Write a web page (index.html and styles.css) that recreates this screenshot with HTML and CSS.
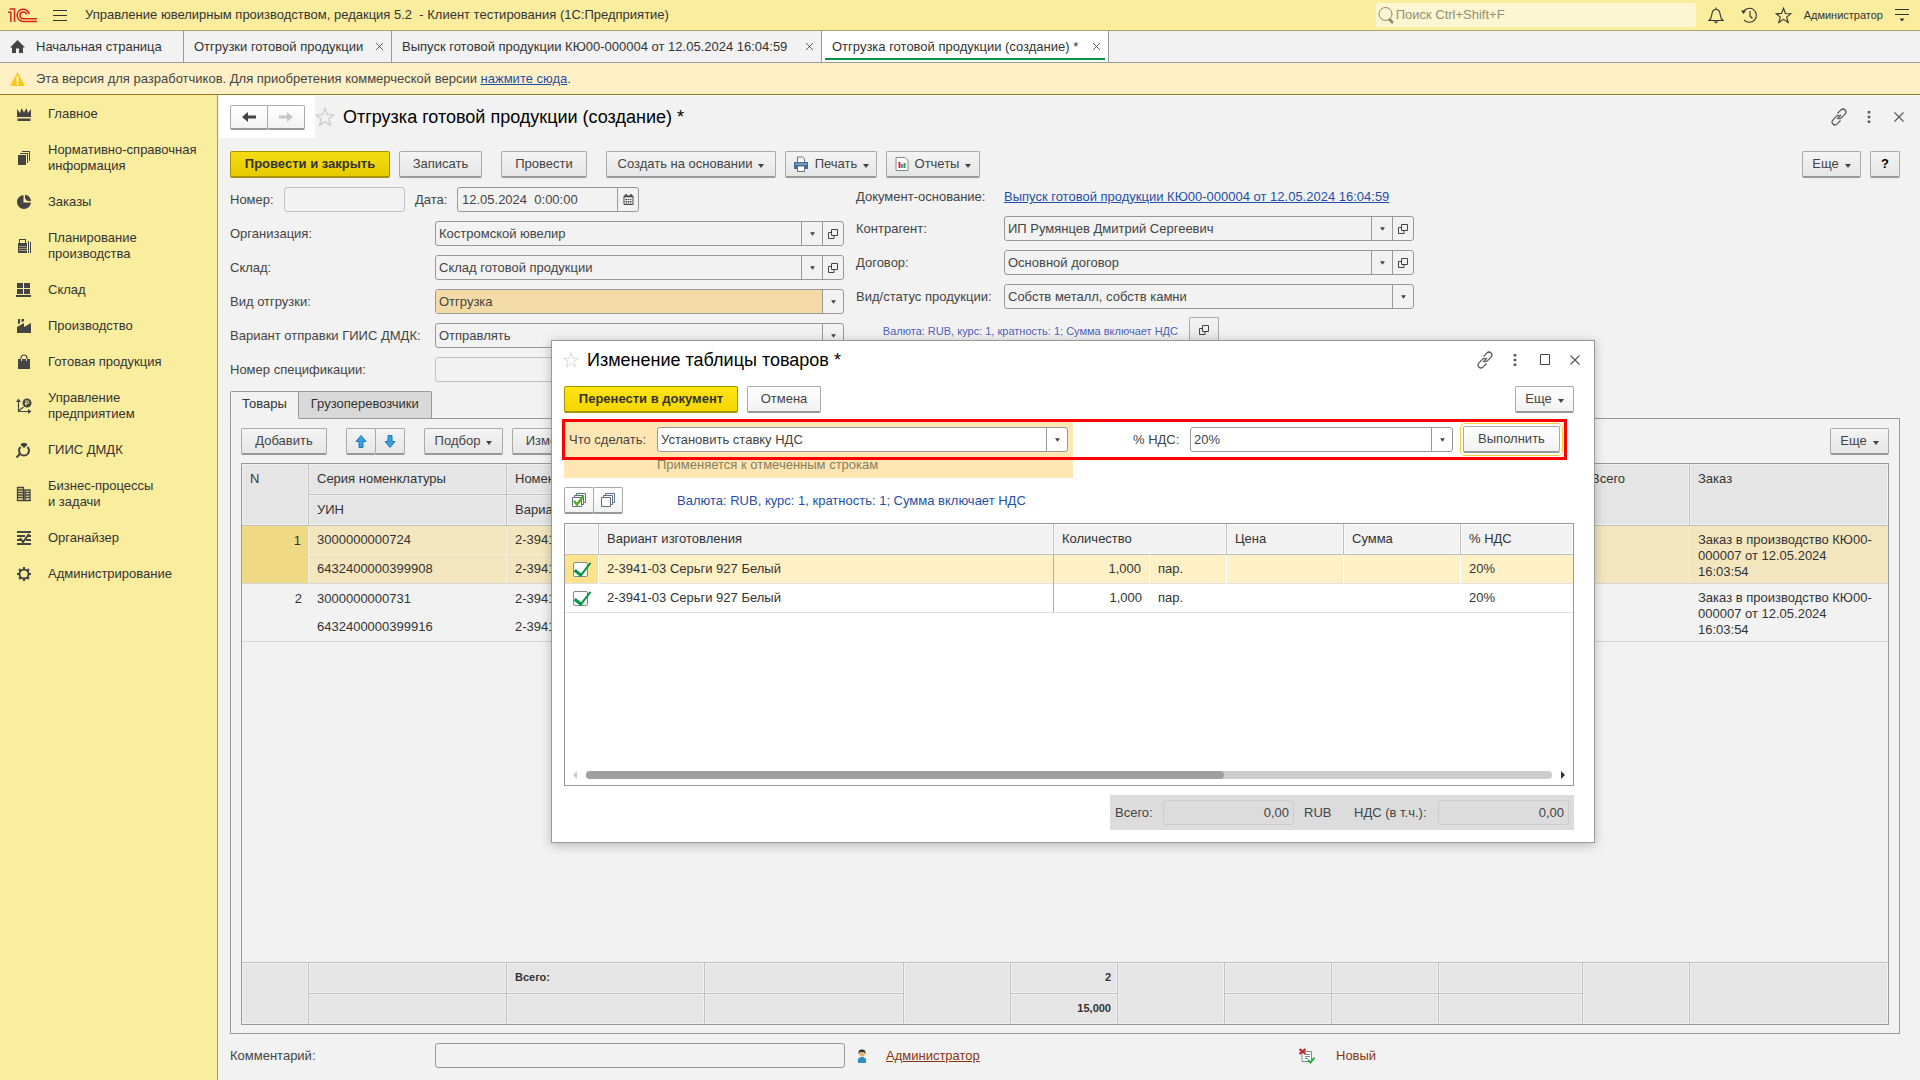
FILE: index.html
```html
<!DOCTYPE html>
<html lang="ru">
<head>
<meta charset="utf-8">
<title>Отгрузка готовой продукции (создание) *</title>
<link rel="stylesheet" href="styles.css">
</head>
<body>
<svg class="sprite" aria-hidden="true">
  <symbol id="i-close" viewBox="0 0 12 12"><path d="M1.500 1.500l9 9M10.500 1.500l-9 9" fill="none" stroke="currentColor" stroke-width="1.100"/></symbol>
  <symbol id="i-star" viewBox="0 0 20 20"><path d="M10 1.500l2.300 6.200 6.400.2-5 4 1.800 6.400L10 14.600l-5.500 3.700 1.800-6.400-5-4 6.400-.2z" fill="none" stroke="currentColor" stroke-width="1.300"/></symbol>
  <symbol id="i-down" viewBox="0 0 6 4"><path d="M0 0h6L3 4z" fill="currentColor"/></symbol>
  <symbol id="i-open" viewBox="0 0 10 10"><path d="M3.500.5h6v6h-6zM3.500 3.500H.5v6h5.500V6.500" fill="none" stroke="currentColor"/></symbol>
  <symbol id="i-link" viewBox="0 0 18 18"><g fill="none" stroke="currentColor" stroke-width="1.200"><path d="M7.500 5.500l3.200-3.300c1.300-1.300 3.300-1.300 4.400-.2s1 3-.3 4.300l-3.200 3.300c-1 1-2 1.200-3 .8"/><path d="M10.500 12.500l-3.200 3.300c-1.300 1.300-3.300 1.300-4.400.2s-1-3 .3-4.300l3.200-3.300c1-1 2-1.200 3-.8"/><path d="M7 11.200l4-4.200"/></g></symbol>
  <symbol id="i-dots" viewBox="0 0 4 14"><path d="M.7 1h2.600v2.600H.7zM.7 5.700h2.600v2.600H.7zM.7 10.400h2.600V13H.7z" fill="currentColor"/></symbol>
</svg>

<header class="topbar">
  <svg class="logo" viewBox="0 0 30 15"><g fill="none" stroke="#d9261c" stroke-width="1.500"><path d="M0 4.200h2.800V14M1.500 1H6.500v13"/><path d="M21.200 6A6.100 6.100 0 1 0 15.500 13.400H29"/><path d="M18.700 6.500a3.400 3.400 0 1 0-3.200 4.300H29"/></g></svg>
  <button class="icon-btn burger" aria-label="Меню"><svg width="14" height="13" viewBox="0 0 14 13"><path d="M0 1.500h14M0 6.500h14M0 11.500h14" stroke="#333"/></svg></button>
  <span class="app-title">Управление ювелирным производством, редакция 5.2 &nbsp;- Клиент тестирования (1С:Предприятие)</span>
  <label class="search"><svg width="16" height="19" viewBox="0 0 16 19"><circle cx="7.500" cy="8" r="6.500" fill="none" stroke="#8d8868"/><path d="M11 13l4 4" stroke="#8d8868" stroke-width="2.500"/></svg><input type="text" placeholder="Поиск Ctrl+Shift+F" aria-label="Поиск"></label>
  <button class="icon-btn" aria-label="Уведомления"><svg width="16" height="17" viewBox="0 0 16 17"><path d="M1 13.500h14c-2.500-2-2.500-4-3-7C11.600 3.500 10 2.500 8 2.500s-3.600 1-4 4c-.5 3-.5 5-3 7zM8 2.500V.5" fill="none" stroke="#333" stroke-width="1.100"/><path d="M5.500 14.500h5l-2.500 2z" fill="#333"/></svg></button>
  <button class="icon-btn" aria-label="История"><svg width="17" height="17" viewBox="0 0 17 17"><path d="M2.200 5A7 7 0 1 1 3 12.800M9 4v5l2.500 2.500" fill="none" stroke="#333" stroke-width="1.100"/><path d="M0 3.500h5L2.500 7z" fill="#333"/></svg></button>
  <button class="icon-btn" aria-label="Избранное"><svg width="17" height="17"><use href="#i-star"/></svg></button>
  <a class="user" href="#">Администратор</a>
  <button class="icon-btn" aria-label="Настройки"><svg width="14" height="13" viewBox="0 0 14 13"><path d="M0 .5h14M0 5.500h14" stroke="#333"/><path d="M4.500 9.500h5L7 12.500z" fill="#333"/></svg></button>
</header>

<nav class="tabs">
  <a class="tab tab-home" href="#"><svg width="15" height="13" viewBox="0 0 15 13"><path d="M7.500 0L0 7.500h2V13h4V8.500h3V13h4V7.500h2z" fill="#444"/></svg>Начальная страница</a>
  <a class="tab tab-list" href="#">Отгрузки готовой продукции<svg width="9" height="9"><use href="#i-close"/></svg></a>
  <a class="tab tab-source" href="#">Выпуск готовой продукции КЮ00-000004 от 12.05.2024 16:04:59<svg width="9" height="9"><use href="#i-close"/></svg></a>
  <a class="tab tab-active" href="#">Отгрузка готовой продукции (создание) *<svg width="9" height="9"><use href="#i-close"/></svg></a>
</nav>

<div class="notice">
  <svg width="15" height="14" viewBox="0 0 15 14"><path d="M7.500 0L15 14H0z" fill="#f7c81e"/><path d="M7.500 4.500v5M7.500 10.500v2" stroke="#fff" stroke-width="1.800"/></svg>
  <p>Эта версия для разработчиков. Для приобретения коммерческой версии <a href="#">нажмите сюда</a>.</p>
</div>

<div class="workspace">
  <nav class="sidebar">
    <a href="#"><svg width="16" height="16" viewBox="0 0 16 16"><path d="M1 3l3 4 1.500-5L8 6.500 10.500 2 12 7l3-4v8H1zM1.500 12.500h13V15h-13z"/></svg><span>Главное</span></a>
    <a href="#"><svg width="16" height="16" viewBox="0 0 16 16"><path d="M2 5h8v10H2zM4 3h8v10h-1V4H4zM6 1h8v10h-1V2H6z"/></svg><span>Нормативно-справочная<br>информация</span></a>
    <a href="#"><svg width="16" height="16" viewBox="0 0 16 16"><path d="M7.500 1v7.500H15A7 7 0 1 1 7.500 1zM9 0.800a6.500 6.500 0 0 1 6 6.200h-3.500L9 4.500z"/></svg><span>Заказы</span></a>
    <a href="#"><svg width="16" height="16" viewBox="0 0 16 16"><path d="M3 5V1h7v4h1v10H2V5zm1-3v3h5V2zM12 3h1v12h-1zM14 4h1v11h-1z" fill-rule="evenodd"/><path d="M3.500 8.500h7M3.500 10.500h7M3.500 12.500h7" stroke="#fbed9e" stroke-dasharray="1 1"/></svg><span>Планирование<br>производства</span></a>
    <a href="#"><svg width="16" height="16" viewBox="0 0 16 16"><path d="M1 1h6v5H1zM8 1h6v5H8zM1 7h6v5H1zM8 7h6v5H8zM0 13h15v2H0z"/></svg><span>Склад</span></a>
    <a href="#"><svg width="16" height="16" viewBox="0 0 16 16"><path d="M1 15V9l7-4v4l7-4v10zM2 1h2v4L2 6.500zM5.500 1H8v2L5.500 4.500z"/></svg><span>Производство</span></a>
    <a href="#"><svg width="16" height="16" viewBox="0 0 16 16"><path d="M2 5h12v10H2z"/><path d="M5 7V4a3 3 0 0 1 6 0v3" fill="none" stroke="#444" stroke-width="1.200"/><path d="M5.500 5v2M10.500 5v2" stroke="#fbed9e"/></svg><span>Готовая продукция</span></a>
    <a href="#"><svg width="16" height="16" viewBox="0 0 16 16"><path d="M2.500 2v11.500H14M2.500 13l5-4" fill="none" stroke="#444" stroke-width="1.200"/><path d="M0 4l2.500-3.500L5 4zM12 11l3.500 2.500L12 16z"/><circle cx="11" cy="5" r="4.500"/><path d="M10 2.500v5M10 3h1.500a1 1 0 0 1 0 2.500H9" fill="none" stroke="#fbed9e"/></svg><span>Управление<br>предприятием</span></a>
    <a href="#"><svg width="16" height="16" viewBox="0 0 16 16"><path d="M8 6l3.500-3L10 1H6L4.500 3z"/><path d="M4.500 5a5 5 0 1 0 7 0" fill="none" stroke="#444" stroke-width="2"/><path d="M4 12l-3.500 3.500" stroke="#444" stroke-width="2"/></svg><span>ГИИС ДМДК</span></a>
    <a href="#"><svg width="16" height="16" viewBox="0 0 16 16"><path d="M1.500 15V1.500h6V15M9 15V4h5v11M1 14.500h14M2 4h5.500M2 6.500h5.500M2 9h5.500M2 11.500h5.500M9 6.500h5M9 9h5M9 11.500h5" fill="none" stroke="#444" stroke-width="1.300"/></svg><span>Бизнес-процессы<br>и задачи</span></a>
    <a href="#"><svg width="16" height="16" viewBox="0 0 16 16"><path d="M1 2h14M1 6h8M12 6h3M1 10h4M10 10h5M1 14h14" stroke="#444" stroke-width="2"/><path d="M4 8l3 4 6-8" fill="none" stroke="#444" stroke-width="2"/></svg><span>Органайзер</span></a>
    <a href="#"><svg width="16" height="16" viewBox="0 0 16 16"><circle cx="8" cy="8" r="4.500" fill="none" stroke="#444" stroke-width="2"/><path d="M8 1v2.500M8 12.500V15M1 8h2.500M12.500 8H15M3 3l2 2M11 11l2 2M13 3l-2 2M5 11l-2 2" stroke="#444" stroke-width="2"/></svg><span>Администрирование</span></a>
  </nav>

  <main class="doc">
    <div class="doc-head">
      <div class="history">
        <button class="btn" aria-label="Назад"><svg width="14" height="10" viewBox="0 0 14 10"><path d="M0 5l6-5v3.500h8v3H6V10z" fill="#444"/></svg></button><button class="btn" aria-label="Вперед"><svg width="14" height="10" viewBox="0 0 14 10"><path d="M14 5L8 0v3.500H0v3h8V10z" fill="#c6c6c6"/></svg></button>
      </div>
      <svg class="fav" width="20" height="20"><use href="#i-star"/></svg>
      <h1>Отгрузка готовой продукции (создание) *</h1>
      <div class="win-tools">
        <button class="icon-btn" aria-label="Ссылка"><svg width="18" height="18"><use href="#i-link"/></svg></button>
        <button class="icon-btn" aria-label="Меню формы"><svg width="4" height="14"><use href="#i-dots"/></svg></button>
        <button class="icon-btn" aria-label="Закрыть"><svg width="12" height="12"><use href="#i-close"/></svg></button>
      </div>
    </div>

    <div class="toolbar">
      <button class="btn btn-main w160">Провести и закрыть</button>
      <button class="btn w83">Записать</button>
      <button class="btn w86 ml">Провести</button>
      <button class="btn w170 ml">Создать на основании<svg class="caret"><use href="#i-down"/></svg></button>
      <button class="btn w92"><svg width="16" height="16" viewBox="0 0 16 16"><path d="M4.500 6V1h5l2 2v3" fill="#fff" stroke="#5d7082"/><path d="M1 6h14v7H1z" fill="#3f6c98"/><path d="M2 8h12" stroke="#a9c2da"/><path d="M4.500 10h7v5.500h-7z" fill="#fff" stroke="#5d7082"/></svg>Печать<svg class="caret"><use href="#i-down"/></svg></button>
      <button class="btn w94"><svg width="14" height="16" viewBox="0 0 14 16"><path d="M1 1.500h9l3 3v10H1z" fill="#fff" stroke="#7d8a96"/><path d="M4.500 6v6" stroke="#d22" stroke-width="2"/><path d="M7 8v4" stroke="#36c" stroke-width="1.500"/><path d="M9.500 7v5" stroke="#2a2" stroke-width="2"/></svg>Отчеты<svg class="caret"><use href="#i-down"/></svg></button>
      <button class="btn w59 push">Еще<svg class="caret"><use href="#i-down"/></svg></button>
      <button class="btn btn-help">?</button>
    </div>

    <div class="form">
      <div class="form-left">
        <div class="row">
          <label class="lb-num" for="num">Номер:</label><input class="field muted w121" id="num" type="text">
          <label class="lb-date" for="date">Дата:</label>
          <div class="combo w182"><input id="date" type="text" value="12.05.2024  0:00:00"><button class="combo-btn" aria-label="Календарь"><svg width="11" height="11" viewBox="0 0 11 11"><path d="M1 2h9v8.500H1z" fill="none" stroke="#444"/><path d="M1 2.500h9M3 0v2M8 0v2" stroke="#444" stroke-width="1.500"/><path d="M2.500 5.500h6M2.500 7.500h6M2.500 9h6" stroke="#444" stroke-dasharray="1.500 .7"/></svg></button></div>
        </div>
        <div class="row"><label for="org">Организация:</label><div class="combo"><select id="org"><option>Костромской ювелир</option></select><span class="combo-btn"><svg class="caret"><use href="#i-down"/></svg></span><button class="combo-btn" aria-label="Открыть"><svg width="10" height="10"><use href="#i-open"/></svg></button></div></div>
        <div class="row"><label for="store">Склад:</label><div class="combo"><select id="store"><option>Склад готовой продукции</option></select><span class="combo-btn"><svg class="caret"><use href="#i-down"/></svg></span><button class="combo-btn" aria-label="Открыть"><svg width="10" height="10"><use href="#i-open"/></svg></button></div></div>
        <div class="row"><label for="kind">Вид отгрузки:</label><div class="combo"><select id="kind" class="hot"><option>Отгрузка</option></select><span class="combo-btn"><svg class="caret"><use href="#i-down"/></svg></span></div></div>
        <div class="row"><label for="giis">Вариант отправки ГИИС ДМДК:</label><div class="combo"><select id="giis"><option>Отправлять</option></select><span class="combo-btn"><svg class="caret"><use href="#i-down"/></svg></span></div></div>
        <div class="row"><label for="spec">Номер спецификации:</label><input class="field muted" id="spec" type="text"></div>
      </div>
      <div class="form-right">
        <div class="row row-link"><span class="lb">Документ-основание:</span><a href="#">Выпуск готовой продукции КЮ00-000004 от 12.05.2024 16:04:59</a></div>
        <div class="row"><label for="partner">Контрагент:</label><div class="combo"><select id="partner"><option>ИП Румянцев Дмитрий Сергеевич</option></select><span class="combo-btn"><svg class="caret"><use href="#i-down"/></svg></span><button class="combo-btn" aria-label="Открыть"><svg width="10" height="10"><use href="#i-open"/></svg></button></div></div>
        <div class="row"><label for="contract">Договор:</label><div class="combo"><select id="contract"><option>Основной договор</option></select><span class="combo-btn"><svg class="caret"><use href="#i-down"/></svg></span><button class="combo-btn" aria-label="Открыть"><svg width="10" height="10"><use href="#i-open"/></svg></button></div></div>
        <div class="row"><label for="status">Вид/статус продукции:</label><div class="combo"><select id="status"><option>Собств металл, собств камни</option></select><span class="combo-btn"><svg class="caret"><use href="#i-down"/></svg></span></div></div>
        <div class="row row-currency"><span>Валюта: RUB, курс: 1, кратность: 1; Сумма включает НДС</span><button class="btn" aria-label="Изменить валюту"><svg width="10" height="10"><use href="#i-open"/></svg></button></div>
      </div>
    </div>

    <div class="page-tabs"><button class="page-tab on">Товары</button><button class="page-tab">Грузоперевозчики</button></div>
    <section class="panel">
      <div class="toolbar">
        <button class="btn w86">Добавить</button>
        <div class="btn-pair ml"><button class="btn" aria-label="Вверх"><svg width="12" height="13" viewBox="0 0 12 13"><path d="M6 .5L11 6.500H8v6H4v-6H1z" fill="#3aa0e0" stroke="#1f78b8"/></svg></button><button class="btn" aria-label="Вниз"><svg width="12" height="13" viewBox="0 0 12 13"><path d="M6 12.500L1 6.500h3v-6h4v6h3z" fill="#3aa0e0" stroke="#1f78b8"/></svg></button></div>
        <button class="btn w79 ml">Подбор<svg class="caret"><use href="#i-down"/></svg></button>
        <button class="btn w86">Изменить</button>
        <button class="btn w59 push">Еще<svg class="caret"><use href="#i-down"/></svg></button>
      </div>
      <div class="grid">
        <table class="goods">
          <colgroup><col class="c67"><col class="c198"><col class="c198"><col class="c199"><col class="c107"><col class="c107"><col class="c107"><col class="c107"><col class="c107"><col class="c144"><col class="c107"><col></colgroup>
          <thead>
            <tr><th rowspan="2">N</th><th>Серия номенклатуры</th><th>Номенклатура</th><th></th><th rowspan="2"></th><th></th><th rowspan="2"></th><th></th><th></th><th></th><th rowspan="2">Всего</th><th rowspan="2">Заказ</th></tr>
            <tr><th>УИН</th><th>Вариант</th><th></th><th></th><th></th><th></th><th></th></tr>
          </thead>
          <tbody class="picked">
            <tr><td rowspan="2" class="num">1</td><td>3000000000724</td><td>2-3941-03</td><td></td><td rowspan="2"></td><td></td><td rowspan="2"></td><td></td><td></td><td></td><td rowspan="2"></td><td rowspan="2" class="order">Заказ в производство КЮ00-<br>000007 от 12.05.2024<br>16:03:54</td></tr>
            <tr><td>6432400000399908</td><td>2-3941-03</td><td></td><td></td><td></td><td></td><td></td></tr>
          </tbody>
          <tbody>
            <tr><td rowspan="2" class="num">2</td><td>3000000000731</td><td>2-3941-03</td><td></td><td rowspan="2"></td><td></td><td rowspan="2"></td><td></td><td></td><td></td><td rowspan="2"></td><td rowspan="2" class="order">Заказ в производство КЮ00-<br>000007 от 12.05.2024<br>16:03:54</td></tr>
            <tr><td>6432400000399916</td><td>2-3941-03</td><td></td><td></td><td></td><td></td><td></td></tr>
          </tbody>
        </table>
        <table class="goods totals">
          <colgroup><col class="c67"><col class="c198"><col class="c198"><col class="c199"><col class="c107"><col class="c107"><col class="c107"><col class="c107"><col class="c107"><col class="c144"><col class="c107"><col></colgroup>
          <tbody>
            <tr><td rowspan="2"></td><td></td><td>Всего:</td><td></td><td rowspan="2"></td><td class="sum">2</td><td rowspan="2"></td><td></td><td></td><td></td><td rowspan="2"></td><td rowspan="2"></td></tr>
            <tr><td></td><td></td><td></td><td class="sum">15,000</td><td></td><td></td><td></td></tr>
          </tbody>
        </table>
      </div>
    </section>

    <footer class="doc-foot">
      <label for="comment">Комментарий:</label><input class="field" id="comment" type="text">
      <svg class="person" width="10" height="14" viewBox="0 0 10 14"><path d="M1 14V10l2.500-2h3L9 10v4z" fill="#2f8fc4"/><circle cx="5" cy="4.500" r="3" fill="#e8b26a"/><path d="M1.500 5V3A3 3 0 0 1 5 .500 3 3 0 0 1 8.500 3v2L7 3H3z" fill="#333"/></svg>
      <a class="brown" href="#">Администратор</a>
      <span class="state"><svg width="17" height="16" viewBox="0 0 17 16"><path d="M3 3.500h9.500v10H3z" fill="#fff" stroke="#7d8a96"/><path d="M6 6.500h5M6 8.500h5M6 10.500h3" stroke="#7d8a96"/><path d="M.500 1l6 5M6.500 1l-6 5" stroke="#c8202a" stroke-width="2"/><path d="M9 12l2.500 2.500 4-5" fill="none" stroke="#1fae3c" stroke-width="2"/></svg>Новый</span>
    </footer>
  </main>
</div>

<section class="dialog" role="dialog" aria-labelledby="dlg-title">
  <div class="dlg-head">
    <svg class="fav" width="16" height="16"><use href="#i-star"/></svg>
    <h2 id="dlg-title">Изменение таблицы товаров *</h2>
    <div class="win-tools">
      <button class="icon-btn" aria-label="Ссылка"><svg width="18" height="18"><use href="#i-link"/></svg></button>
      <button class="icon-btn" aria-label="Меню формы"><svg width="4" height="14"><use href="#i-dots"/></svg></button>
      <button class="icon-btn" aria-label="Развернуть"><svg width="12" height="12" viewBox="0 0 12 12"><path d="M1.500.5h9v10h-9z" fill="none" stroke="#444"/></svg></button>
      <button class="icon-btn" aria-label="Закрыть"><svg width="12" height="12"><use href="#i-close"/></svg></button>
    </div>
  </div>
  <div class="dlg-body">
    <div class="toolbar">
      <button class="btn btn-main w174">Перенести в документ</button>
      <button class="btn w74">Отмена</button>
      <button class="btn w59 push">Еще<svg class="caret"><use href="#i-down"/></svg></button>
    </div>
    <div class="action">
      <div class="action-what">
        <label for="what">Что сделать:</label>
        <div class="combo"><select id="what"><option>Установить ставку НДС</option></select><span class="combo-btn"><svg class="caret"><use href="#i-down"/></svg></span></div>
        <p class="hint">Применяется к отмеченным строкам</p>
      </div>
      <div class="action-rate">
        <label for="rate">% НДС:</label>
        <div class="combo"><select id="rate"><option>20%</option></select><span class="combo-btn"><svg class="caret"><use href="#i-down"/></svg></span></div>
        <button class="btn btn-focus">Выполнить</button>
      </div>
      <div class="frame"></div>
    </div>
    <div class="marks">
      <div class="btn-pair"><button class="btn" aria-label="Отметить все"><svg width="16" height="16" viewBox="0 0 16 16"><path d="M5.500 4V1.500h9v9H13M3.500 6V3.500h9v9H11" fill="#fff" stroke="#5d7082"/><path d="M1.500 5.500h9v9h-9z" fill="#fff" stroke="#5d7082"/><path d="M3 9l3 3.500L12.500 4" fill="none" stroke="#4fae1e" stroke-width="2.500"/></svg></button><button class="btn" aria-label="Снять отметки"><svg width="16" height="16" viewBox="0 0 16 16"><path d="M5.500 4V1.500h9v9H13M3.500 6V3.500h9v9H11" fill="#fff" stroke="#5d7082"/><path d="M1.500 5.500h9v9h-9z" fill="#fff" stroke="#5d7082"/></svg></button></div>
      <a href="#">Валюта: RUB, курс: 1, кратность: 1; Сумма включает НДС</a>
    </div>
    <div class="lines">
      <table>
        <colgroup><col class="c34"><col><col class="c96"><col class="c77"><col class="c117"><col class="c117"><col class="c112"></colgroup>
        <thead><tr><th></th><th>Вариант изготовления</th><th colspan="2">Количество</th><th>Цена</th><th>Сумма</th><th>% НДС</th></tr></thead>
        <tbody>
          <tr class="picked"><td class="tick"><input type="checkbox" checked aria-label="Строка 1"></td><td class="edge">2-3941-03 Серьги 927 Белый</td><td class="num">1,000</td><td>пар.</td><td></td><td></td><td>20%</td></tr>
          <tr><td class="tick"><input type="checkbox" checked aria-label="Строка 2"></td><td class="edge">2-3941-03 Серьги 927 Белый</td><td class="num">1,000</td><td>пар.</td><td></td><td></td><td>20%</td></tr>
        </tbody>
      </table>
      <div class="scroll"><svg width="4" height="8" viewBox="0 0 4 8"><path d="M4 0v8L0 4z" fill="#ccc"/></svg><div class="track"><div class="thumb"></div></div><svg width="4" height="8" viewBox="0 0 4 8"><path d="M0 0v8l4-4z" fill="#333"/></svg></div>
    </div>
    <div class="sums">
      <label for="total">Всего:</label><input class="field" id="total" type="text" value="0,00" readonly>
      <span>RUB</span>
      <label for="vat">НДС (в т.ч.):</label><input class="field" id="vat" type="text" value="0,00" readonly>
    </div>
  </div>
</section>
</body>
</html>
```
FILE: styles.css
```css
* { box-sizing: border-box; }
body {
  margin: 0;
  min-height: 100vh;
  display: flex;
  flex-direction: column;
  position: relative;
  background: #f2f2f2;
  color: #444;
  font: 13px/16px "Liberation Sans", Arial, sans-serif;
}
button, input, select { font: inherit; color: inherit; }
p, h1, h2 { margin: 0; font-weight: normal; }
a { color: #1f4fa8; }
.sprite { display: none; }
.caret { width: 6px; height: 4px; color: #444; }

/* top bar */
.topbar {
  display: flex;
  align-items: center;
  height: 31px;
  padding: 0 10px 0 8px;
  background: #fbed9e;
  border-bottom: 1px solid #a8a26c;
  color: #333;
}
.logo { width: 30px; height: 15px; }
.icon-btn { display: flex; align-items: center; justify-content: center; padding: 0; border: 0; background: none; color: #555; }
.burger { margin: 0 17px 0 14px; }
.app-title { flex: 1; white-space: nowrap; }
.search {
  display: flex;
  align-items: center;
  width: 320px;
  height: 24px;
  margin-right: 12px;
  padding: 0 2px;
  background: #fdf6d2;
  border-radius: 2px;
}
.search input { flex: 1; padding: 0 2px; border: 0; background: none; outline: 0; }
.search input::placeholder { color: #948f72; opacity: 1; }
.topbar > .icon-btn { min-width: 16px; color: #333; }
.topbar > .search ~ .icon-btn { margin-right: 17px; }
.topbar > .user ~ .icon-btn { margin-right: 0; }
.topbar .user { margin: 0 11px 0 -5px; color: #333; font-size: 11px; text-decoration: none; }

/* window tabs */
.tabs { display: flex; height: 32px; border-bottom: 1px solid #999; }
.tab {
  display: flex;
  align-items: center;
  justify-content: space-between;
  padding: 0 7px 0 10px;
  border-right: 1px solid #999;
  color: #333;
  text-decoration: none;
  white-space: nowrap;
}
.tab-home { justify-content: flex-start; gap: 11px; min-width: 184px; }
.tab-list { min-width: 208px; }
.tab-source { min-width: 430px; }
.tab-active {
  min-width: 287px;
  background: #fff linear-gradient(#009646, #009646) center bottom 2px / calc(100% - 6px) 2px no-repeat;
}

.notice {
  display: flex;
  align-items: center;
  gap: 11px;
  height: 32px;
  padding: 0 10px;
  background: #fff1c5;
  border-bottom: 1px solid #8f7a1e;
}

.workspace { flex: 1; display: flex; }
.sidebar { width: 218px; padding-top: 1px; background: #fbed9e; border-right: 1px solid #999; }
.sidebar a {
  display: flex;
  align-items: center;
  gap: 16px;
  padding: 10px 8px 10px 16px;
  color: #333;
  text-decoration: none;
}
.sidebar svg { flex: none; fill: #444; }

/* document form */
.doc { flex: 1; min-width: 0; display: flex; flex-direction: column; padding: 0 20px 12px 12px; border-top: 1px solid #fff; }
.doc-head { display: flex; align-items: center; height: 42px; margin: 0 -8px 13px -11px; }
.history { display: flex; align-self: stretch; align-items: center; width: 96px; padding-left: 11px; background: #fff; }
.history .btn { width: 38px; height: 25px; }
.history .btn + .btn { margin-left: -1px; }
.fav { color: #ccc; }
.doc-head h1, .dlg-head h2 { flex: 1; font-size: 18px; line-height: 24px; color: #000; }
.doc-head h1 { margin-left: 8px; }
.win-tools { display: flex; gap: 12px; }
.win-tools .icon-btn { width: 18px; height: 18px; }

.toolbar { display: flex; gap: 9px; }
.toolbar .ml { margin-left: 10px; }
.toolbar .push { margin-left: auto; }
.btn {
  display: flex;
  align-items: center;
  justify-content: center;
  gap: 6px;
  height: 27px;
  padding: 0;
  border: 1px solid #aaa;
  border-bottom: 2px solid #999;
  border-radius: 2px;
  background: linear-gradient(#f4f4f4, #e6e6e6);
  white-space: nowrap;
}
.btn .caret { margin-top: 4px; }
.btn-main { background: linear-gradient(#f5dc12, #e6cb00); border-color: #a89400; font-weight: bold; color: #333; }
.btn-help { width: 30px; font-weight: bold; color: #000; }
.btn-pair { display: flex; }
.btn-pair .btn { width: 30px; }
.btn-pair .btn + .btn { margin-left: -1px; }
.history .btn, .dialog .btn:not(.btn-main) { background: linear-gradient(#fff, #f2f2f2); }
.w59 { width: 59px; }
.w74 { width: 74px; }
.w79 { width: 79px; }
.w83 { width: 83px; }
.w86 { width: 86px; }
.w92 { width: 92px; }
.w94 { width: 94px; }
.w160 { width: 160px; }
.w170 { width: 170px; }
.w174 { width: 174px; }

.form { display: flex; gap: 12px; margin-top: 7px; }
.form-left { width: 614px; display: flex; flex-direction: column; gap: 9px; padding-top: 2px; }
.form-right { width: 558px; display: flex; flex-direction: column; gap: 9px; }
.row { display: flex; align-items: center; height: 25px; white-space: nowrap; }
.row label, .row .lb { width: 205px; flex: none; }
.form-right label, .form-right .lb { width: 148px; }
.row .lb-num { width: 54px; }
.row .lb-date { width: 42px; margin-left: 10px; }
.row-link { height: 22px; padding-top: 2px; }
.field { flex: 1; min-width: 0; height: 25px; padding: 0 4px; border: 1px solid #999; border-radius: 3px; background: none; }
.field.muted { border-color: #c0c0c0; }
.row .w121 { flex: none; width: 121px; }
.combo { flex: 1; display: flex; height: 25px; border: 1px solid #999; border-radius: 3px; overflow: hidden; }
.row .w182 { flex: none; width: 182px; }
.combo input, .combo select { flex: 1; min-width: 0; padding: 0 4px; border: 0; background: none; appearance: none; white-space: pre; }
.combo select { padding: 0 3px; }
.combo .caret { width: 5px; }
.combo .hot { background: #f3dba8; }
.combo-btn { display: flex; align-items: center; justify-content: center; width: 21px; padding: 0; border: 0; border-left: 1px solid #999; background: none; }
.row-currency { justify-content: flex-end; padding-right: 195px; gap: 11px; font-size: 11px; color: #4a5fc0; }
.row-currency .btn { width: 30px; color: #444; }

.page-tabs { display: flex; margin-top: 9px; }
.page-tab { height: 28px; padding: 0 12px 2px; border: 1px solid #999; background: #d9d9d9; color: #333; border-left: 0; border-radius: 0 2px 0 0; }
.page-tab.on { position: relative; padding: 0 11px 2px; background: #f2f2f2; border-left: 1px solid #999; border-bottom-color: #f2f2f2; border-radius: 2px 0 0; }
.panel { flex: 1; display: flex; flex-direction: column; gap: 8px; margin-top: -1px; padding: 9px 10px 8px; border: 1px solid #999; }
.grid { flex: 1; display: flex; flex-direction: column; justify-content: space-between; border: 1px solid #999; }

table { width: 100%; table-layout: fixed; border-collapse: separate; border-spacing: 0; color: #333; }
th { font-weight: normal; text-align: left; vertical-align: top; }
th, td { padding: 0 8px; white-space: nowrap; overflow: hidden; }
.goods th { height: 31px; padding-top: 7px; background: #e5e5e5; border-right: 1px solid #c0c0c0; border-bottom: 1px solid #c0c0c0; box-shadow: inset 0 0 0 1px #f0f0f0; }
.goods td { height: 29px; }
.goods .num { padding: 7px 7px 6px; text-align: right; vertical-align: top; }
.goods .order { padding-top: 6px; vertical-align: top; }
.goods tbody tr:last-child td, .goods td[rowspan] { border-bottom: 1px solid #d4d4d4; }
.picked td { background: #f3e6bf; border-right: 1px solid #f5efdb; border-bottom: 1px solid #f5efdb; }
.picked .num { background: #f0d984; }
.goods.totals td { height: 31px; padding-bottom: 2px; background: #e5e5e5; border-right: 1px solid #c0c0c0; border-top: 1px solid #c0c0c0; box-shadow: inset 0 0 0 1px #f0f0f0; font-size: 11px; font-weight: bold; }
.goods.totals tbody tr td { border-bottom: 0; }
.goods .sum { padding: 0 6px; text-align: right; }
.goods tr > :last-child[rowspan] { border-right: 0; }
.c34 { width: 34px; }
.c67 { width: 67px; }
.c77 { width: 77px; }
.c96 { width: 96px; }
.c107 { width: 107px; }
.c112 { width: 112px; }
.c117 { width: 117px; }
.c144 { width: 144px; }
.c198 { width: 198px; }
.c199 { width: 199px; }

.doc-foot { display: flex; align-items: center; margin-top: 9px; }
.doc-foot label { width: 205px; }
.doc-foot .field { flex: none; width: 410px; }
.person { margin: 0 19px 0 12px; }
.brown { width: 413px; color: #8a3410; }
.state { display: flex; gap: 20px; color: #8a3410; }

/* modal window */
.dialog {
  position: absolute;
  left: 551px;
  top: 340px;
  width: 1044px;
  background: #fff;
  border: 1px solid #999;
  box-shadow: 0 2px 10px rgba(0, 0, 0, .25);
}
.dlg-head { display: flex; align-items: center; height: 38px; padding: 0 10px 0 11px; }
.dlg-head h2 { margin-left: 8px; }
.dlg-head .fav { color: #ddd; }
.dlg-body { padding: 7px 20px 12px 12px; }
.dialog .btn-main { background: linear-gradient(#ffe512, #f5d600); }
.action { position: relative; display: flex; justify-content: space-between; margin-top: 6px; }
.action-what { display: grid; grid-template-columns: 88px 411px; align-items: center; width: 509px; padding: 8px 5px 5px; row-gap: 5px; background: #ffe6b3; }
.action .combo { background: #fff; }
.hint { grid-column: 2; color: #85805c; }
.action-rate { display: flex; align-items: center; align-self: flex-start; height: 41px; padding-right: 14px; }
.action-rate label { width: 57px; }
.action-rate .combo { flex: none; width: 263px; margin-right: 10px; }
.btn-focus { width: 97px; outline: 1px solid #f0cf3c; outline-offset: 2px; }
.frame { position: absolute; left: -2px; right: 7px; top: 0; height: 41px; border: 3px solid #f00; pointer-events: none; }
.marks { display: flex; align-items: center; gap: 54px; margin-top: 9px; }
.marks a { text-decoration: none; }
.lines { display: flex; flex-direction: column; justify-content: space-between; min-height: 263px; margin-top: 9px; border: 1px solid #999; }
.lines th { height: 31px; padding-top: 7px; background: #f2f2f2; border-right: 1px solid #c0c0c0; border-bottom: 1px solid #c0c0c0; box-shadow: inset 0 0 0 1px #fafafa; }
.lines td { height: 29px; border-bottom: 1px solid #e0e0e0; }
.lines .num { text-align: right; }
.lines .picked td { background: #fff1c5; border-right: 1px solid #fff; }
.lines .picked .tick { background: #ffe28c; }
.lines td.edge, .lines .picked td.edge { border-right: 1px solid #b0b0b0; }
.lines tr > :last-child { border-right: 0; }
.tick { overflow: visible; }
.tick input {
  appearance: none;
  display: block;
  width: 15px;
  height: 15px;
  margin: 0;
  border: 1px solid #888;
  border-radius: 2px;
  background: #fff;
  position: relative;
}
.tick input:checked::after {
  content: "";
  position: absolute;
  left: 4px;
  top: -4px;
  width: 7px;
  height: 14px;
  border: solid #009646;
  border-width: 0 2px 3px 0;
  transform: rotate(38deg);
}
.scroll { display: flex; align-items: center; gap: 9px; padding: 0 8px 6px 8px; }
.track { flex: 1; background: #ccc; border-radius: 4px; }
.thumb { width: 66%; height: 8px; background: #a0a0a0; border-radius: 4px; }
.sums { display: flex; align-items: center; width: 464px; height: 35px; margin: 9px 0 0 auto; padding: 0 5px; background: #dcdcdc; white-space: nowrap; }
.sums label { width: 48px; }
.sums span { width: 60px; padding-left: 10px; }
.sums span + label { width: 84px; }
.sums .field { border-color: #ccc; text-align: right; }
```
